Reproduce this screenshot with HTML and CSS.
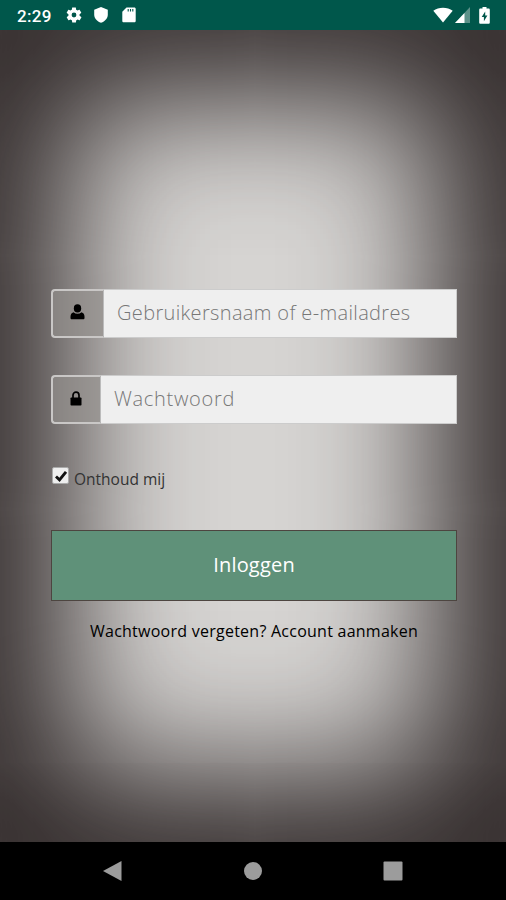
FILE: index.html
```
<!DOCTYPE html>
<html lang="nl">
<head>
  <meta charset="utf-8">
  <title>Inloggen</title>
  <link rel="stylesheet" href="styles.css">
</head>
<body>
  <div class="statusbar">
    <span class="time">2:29</span>
    <svg class="gear" width="18" height="18" viewBox="0 0 24 24"><path fill="#fff" fill-rule="evenodd" d="M19.4 13a7.500 7.500 0 0 0 0-2l2.100-1.600c.2-.2.2-.4.100-.6l-2-3.500c-.1-.2-.4-.3-.6-.2l-2.500 1a7 7 0 0 0-1.700-1L14.500 2.400c0-.2-.2-.4-.5-.4h-4c-.3 0-.5.2-.5.400l-.4 2.700a7 7 0 0 0-1.700 1l-2.500-1c-.2-.1-.5 0-.6.200l-2 3.500c-.1.200 0 .4.100.600L4.600 11a7.500 7.500 0 0 0 0 2l-2.100 1.600c-.2.200-.2.400-.1.600l2 3.500c.1.200.4.300.6.200l2.500-1a7 7 0 0 0 1.700 1l.4 2.700c0 .2.2.4.500.4h4c.3 0 .5-.2.500-.4l.4-2.700a7 7 0 0 0 1.700-1l2.500 1c.2.100.5 0 .6-.2l2-3.500c.1-.2 0-.4-.1-.6zM12 15.200a3.200 3.200 0 1 1 0-6.400 3.200 3.200 0 0 1 0 6.400z"/></svg>
    <svg class="shield" width="14" height="16" viewBox="0 0 14 16"><path fill="#fff" d="M7 0l6.800 2.700v4.800c0 3.800-2.800 7-6.800 8.200-4-1.200-6.800-4.400-6.800-8.200V2.700z"/></svg>
    <svg class="sdcard" width="14" height="16" viewBox="0 0 14 16"><path fill="#fff" d="M4.500.5h7.800c.8 0 1.400.6 1.400 1.400v12c0 .8-.6 1.400-1.400 1.400H1.700c-.8 0-1.400-.6-1.400-1.400V4.800z"/><path stroke="#00574b" stroke-width="1.100" d="M6.200 2v2.600M8.500 2v2.600M10.800 2v2.600"/></svg>
    <span class="fill"></span>
    <svg width="20" height="16" viewBox="0 0 20 16"><path fill="#fff" d="M.3 3.800C5.500-.4 14.500-.4 19.700 3.800L10 15.500z"/></svg>
    <svg class="signal" width="15" height="16" viewBox="0 0 15 16"><path fill="#5c9189" d="M15 0v16H0z"/><path fill="#fff" d="M9.500 5.900V16H0z"/></svg>
    <svg class="battery" width="11" height="17" viewBox="0 0 11 17"><path fill="#fff" d="M3.500 0h4v1.600h2c.8 0 1.300.5 1.300 1.300v12.600c0 .8-.5 1.300-1.300 1.300h-8c-.8 0-1.300-.5-1.300-1.300V2.900c0-.8.5-1.300 1.300-1.300h2z"/><path fill="#00574b" d="M6.200 4.500L2.700 10h2.200v4.200l3.500-5.700H6.200z"/></svg>
  </div>

  <div class="screen">
    <form class="login">
      <div class="field user">
        <span class="addon">
          <svg width="15" height="16" viewBox="0 0 15 16"><ellipse cx="7.500" cy="4.400" rx="3.700" ry="4.100"/><path d="M3.500 8.200a6 6 0 0 0 8 0c2 .6 3 2.200 3 4.600v1.100c0 .8-.5 1.300-1.300 1.300H1.800C1 15.200.5 14.700.5 13.900v-1.100c0-2.400 1-4 3-4.600z"/></svg>
        </span>
        <input type="text" placeholder="Gebruikersnaam of e-mailadres">
      </div>
      <div class="field password">
        <span class="addon">
          <svg width="12" height="15" viewBox="0 0 12 15"><path d="M3 7V4.200a3 3 0 0 1 6 0V7" fill="none" stroke="#000" stroke-width="1.700"/><rect x=".5" y="6.500" width="11" height="8" rx=".8"/></svg>
        </span>
        <input type="password" placeholder="Wachtwoord">
      </div>
      <label class="remember">
        <input type="checkbox" checked>
        <span class="check"><svg width="14" height="14" viewBox="0 0 14 14"><path d="M2 7.500l3.500 3.300L12 2.800" fill="none" stroke="#111" stroke-width="2.900"/></svg></span>
        <span class="label">Onthoud mij</span>
      </label>
      <button type="button" class="submit">Inloggen</button>
      <p class="links"><a href="#">Wachtwoord vergeten?</a> <a href="#">Account aanmaken</a></p>
    </form>
  </div>

  <div class="navbar">
    <svg width="20" height="22" viewBox="0 0 20 22"><path fill="#9c9c9c" d="M18.500 1v20L0 11z"/></svg>
    <svg width="20" height="22" viewBox="0 0 20 22"><circle cx="10" cy="11" r="9" fill="#9c9c9c"/></svg>
    <svg width="20" height="22" viewBox="0 0 20 22"><rect x=".5" y="1.500" width="19" height="19" rx="1" fill="#9c9c9c"/></svg>
  </div>
</body>
</html>
```
FILE: styles.css
```
* {
  box-sizing: border-box;
}

body {
  margin: 0;
  height: 900px;
  display: flex;
  flex-direction: column;
  overflow: hidden;
  font-family: "Open Sans", "Noto Sans", sans-serif;
}

svg {
  display: block;
  flex: none;
}

.statusbar {
  height: 30px;
  padding: 0 16px 0 17px;
  display: flex;
  align-items: center;
  background-color: #00574b;
}

.time {
  width: 48px;
  color: #fff;
  font: 500 17px Roboto, sans-serif;
  letter-spacing: 0.3px;
  padding-top: 2px;
}

.shield {
  margin-left: 11px;
}

.sdcard {
  margin-left: 14px;
}

.fill {
  flex: 1;
}

.signal {
  margin-left: 2px;
}

.battery {
  margin-left: 9px;
}

.screen {
  height: 812px;
  background-color: #d6d4d2;
  box-shadow: inset 0 0 134px 70px #322b2b; /* dark edges */
}

.login {
  padding: 259px 49px 0 51px;
}

.field {
  display: flex;
  height: 49px;
  margin-bottom: 37px;
}

.addon {
  width: 53px;
  display: flex;
  align-items: center;
  justify-content: center;
  padding: 0 2px 3px 0;
  border: 2px solid #c9c7c6;
  border-right: 1px solid #bbb;
  border-radius: 4px 0 0 4px;
  background-color: rgba(150, 146, 144, 0.6);
}

.password .addon {
  width: 50px;
}

.field input {
  flex: 1;
  min-width: 0;
  padding: 0 12px 2px 13px;
  border: 1px solid #ccc;
  border-left: 0;
  border-radius: 0;
  background-color: #efefef;
  font: 300 20px "Open Sans", sans-serif;
  letter-spacing: 0.35px;
}

.password input {
  letter-spacing: 0.7px;
}

.field input::placeholder {
  color: #777;
}

.remember {
  display: flex;
  height: 24px;
  margin-top: 42px;
  padding-left: 1px;
}

.remember input {
  display: none;
}

.check {
  width: 17px;
  height: 17px;
  margin-top: 1px;
  padding: 1px;
  border: 1px solid #aaa;
  border-radius: 2px;
  background-color: #eee;
}

.label {
  margin-left: 5px;
  color: #333;
  font-size: 15.5px;
  line-height: 27px;
}

.submit {
  display: block;
  width: 100%;
  height: 71px;
  margin-top: 40px;
  padding: 0 0 2px;
  border: 1px solid #4d4540;
  background-color: #5f9179;
  color: #fff;
  font: 20px "Open Sans", sans-serif;
  letter-spacing: 0.2px;
}

.links {
  margin: 18px 0 0;
  text-align: center;
  font-size: 16px;
  font-weight: 500;
  line-height: 24px;
  letter-spacing: 0.25px;
}

.links a {
  color: #000;
  text-decoration: none;
}

.navbar {
  height: 58px;
  padding: 0 103px;
  display: flex;
  align-items: center;
  justify-content: space-between;
  background-color: #000;
}
```
